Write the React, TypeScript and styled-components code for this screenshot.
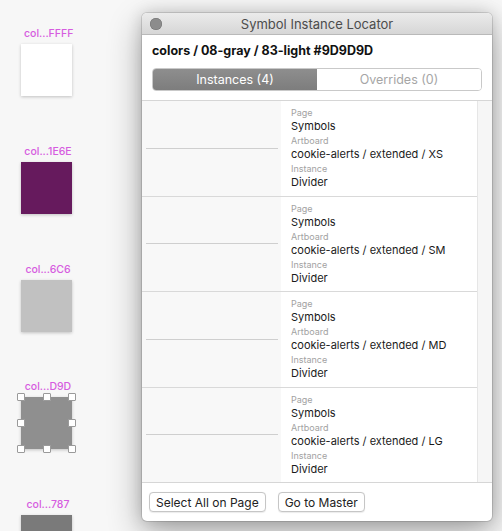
import React from "react";
import styled, { createGlobalStyle } from "styled-components";

const GlobalStyle = createGlobalStyle`
  html, body {
    margin: 0;
    padding: 0;
    background: #f7f7f7;
    overflow: hidden;
    font-family: Inter, Roboto, "Liberation Sans", sans-serif;
  }
`;

interface Swatch {
  name: string;
  color: string;
  selected?: boolean;
}

interface Instance {
  page: string;
  artboard: string;
  instance: string;
}

const swatches: Swatch[] = [
  { name: "col...FFFF", color: "#ffffff" },
  { name: "col...1E6E", color: "#661a5d" },
  { name: "col...6C6", color: "#c1c1c1" },
  { name: "col...D9D", color: "#8f8f8f", selected: true },
  { name: "col...787", color: "#7a7a7a" },
];

const instances: Instance[] = ["XS", "SM", "MD", "LG"].map((size) => ({
  page: "Symbols",
  artboard: `cookie-alerts / extended / ${size}`,
  instance: "Divider",
}));

const Desktop = styled.div`
  display: flex;
  align-items: flex-start;
  width: 502px;
  height: 531px;
  overflow: hidden;
`;

const Canvas = styled.div`
  width: 142px;
  flex-shrink: 0;
  display: flex;
  flex-direction: column;
  padding: 28px 0 0 21px;
  gap: 49.75px;
  box-sizing: border-box;
`;

const SwatchItem = styled.div`
  display: flex;
  flex-direction: column;
  gap: 4px;
  width: 51px;
`;

const SwatchLabel = styled.div`
  font-size: 10.5px;
  font-weight: 500;
  color: #d65ce0;
  text-align: center;
  line-height: 12px;
  padding-left: 3px;
`;

const SwatchBox = styled.div<{ $color: string }>`
  position: relative;
  width: 51px;
  height: 52px;
  background: ${(p) => p.$color};
  box-shadow: 0 1px 3px rgba(0, 0, 0, 0.22);
`;

const Handle = styled.span`
  position: absolute;
  width: 6px;
  height: 6px;
  background: #fff;
  border: 1px solid #9a9a9a;
  border-radius: 1px;
  transform: translate(-50%, -50%);
`;

const handlePositions = [
  [0, 0], [50, 0], [100, 0],
  [0, 50], [100, 50],
  [0, 100], [50, 100], [100, 100],
];

const Window = styled.div`
  margin-top: 13px;
  width: 350px;
  height: 508px;
  background: #fff;
  border-radius: 5px;
  display: flex;
  flex-direction: column;
  overflow: hidden;
  box-shadow: 0 0 0 1px rgba(0, 0, 0, 0.12), 0 12px 34px rgba(0, 0, 0, 0.32),
    0 0 16px rgba(0, 0, 0, 0.16);
`;

const TitleBar = styled.div`
  height: 21px;
  display: grid;
  grid-template-columns: 28px 1fr 28px;
  align-items: center;
  background: linear-gradient(#ebebeb, #d6d6d6);
  border-bottom: 1px solid #b9b9b9;
`;

const CloseDot = styled.span`
  width: 12px;
  height: 12px;
  margin-left: 8px;
  border-radius: 50%;
  background: #8c8c8c;
  box-shadow: inset 0 0 0 0.5px #6f6f6f;
`;

const Title = styled.div`
  text-align: center;
  font-size: 13px;
  color: #4c4c4c;
`;

const Header = styled.div`
  padding: 8px 10px 9px 10px;
  display: flex;
  flex-direction: column;
  gap: 9px;
  border-bottom: 1px solid #d6d6d6;
`;

const SymbolName = styled.div`
  font-size: 12.5px;
  font-weight: 700;
  color: #111;
  line-height: 16px;
`;

const Segmented = styled.div`
  display: grid;
  grid-template-columns: 1fr 1fr;
  height: 21px;
  border: 1px solid #c9c9c9;
  border-radius: 4px;
  overflow: hidden;
`;

const Segment = styled.div<{ $active?: boolean }>`
  display: flex;
  align-items: center;
  justify-content: center;
  font-size: 12.5px;
  color: ${(p) => (p.$active ? "#fff" : "#a6a6a6")};
  background: ${(p) => (p.$active ? "linear-gradient(#8e8e8e, #7d7d7d)" : "#fff")};
`;

const ListArea = styled.div`
  flex: 1;
  display: flex;
  min-height: 0;
`;

const List = styled.div`
  flex: 1;
  display: flex;
  flex-direction: column;
`;

const Row = styled.div`
  flex: 1;
  display: grid;
  grid-template-columns: 139px 1fr;
  border-bottom: 1px solid #d9d9d9;
  &:last-child {
    border-bottom: none;
  }
`;

const Preview = styled.div`
  background: #f8f8f8;
  display: flex;
  align-items: center;
  padding: 0 3px 0 4px;
`;

const PreviewLine = styled.div`
  flex: 1;
  height: 1px;
  background: #cfcfcf;
`;

const Details = styled.div`
  padding: 5px 10px 0 10px;
  display: flex;
  flex-direction: column;
`;

const FieldLabel = styled.div`
  font-size: 9px;
  color: #a2a2a2;
  line-height: 13px;
`;

const FieldValue = styled.div`
  font-size: 11px;
  color: #1a1a1a;
  line-height: 15px;
`;

const ScrollTrack = styled.div`
  width: 14px;
  background: #f6f6f6;
  border-left: 1px solid #e6e6e6;
`;

const Footer = styled.div`
  height: 38px;
  border-top: 1px solid #d6d6d6;
  display: flex;
  align-items: center;
  gap: 12px;
  padding: 0 7px;
`;

const Button = styled.button`
  height: 20px;
  padding: 0 6px;
  font-family: inherit;
  font-size: 12px;
  color: #222;
  background: #fff;
  border: 1px solid #c6c6c6;
  border-radius: 4px;
  box-shadow: 0 0.5px 1px rgba(0, 0, 0, 0.08);
`;

export default function App() {
  return (
    <>
      <GlobalStyle />
      <Desktop>
        <Canvas>
          {swatches.map((s) => (
            <SwatchItem key={s.name}>
              <SwatchLabel>{s.name}</SwatchLabel>
              <SwatchBox $color={s.color}>
                {s.selected &&
                  handlePositions.map(([x, y]) => (
                    <Handle key={`${x}-${y}`} style={{ left: `${x}%`, top: `${y}%` }} />
                  ))}
              </SwatchBox>
            </SwatchItem>
          ))}
        </Canvas>
        <Window>
          <TitleBar>
            <CloseDot />
            <Title>Symbol Instance Locator</Title>
            <span />
          </TitleBar>
          <Header>
            <SymbolName>colors / 08-gray / 83-light #9D9D9D</SymbolName>
            <Segmented>
              <Segment $active>Instances (4)</Segment>
              <Segment>Overrides (0)</Segment>
            </Segmented>
          </Header>
          <ListArea>
            <List>
              {instances.map((it) => (
                <Row key={it.artboard}>
                  <Preview>
                    <PreviewLine />
                  </Preview>
                  <Details>
                    <FieldLabel>Page</FieldLabel>
                    <FieldValue>{it.page}</FieldValue>
                    <FieldLabel>Artboard</FieldLabel>
                    <FieldValue>{it.artboard}</FieldValue>
                    <FieldLabel>Instance</FieldLabel>
                    <FieldValue>{it.instance}</FieldValue>
                  </Details>
                </Row>
              ))}
            </List>
            <ScrollTrack />
          </ListArea>
          <Footer>
            <Button>Select All on Page</Button>
            <Button>Go to Master</Button>
          </Footer>
        </Window>
      </Desktop>
    </>
  );
}
